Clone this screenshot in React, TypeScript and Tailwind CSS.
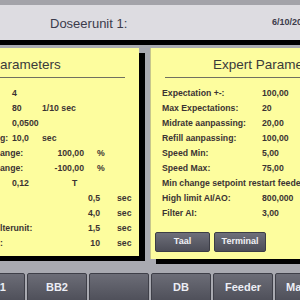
import React from "react";

export default function App() {
  return (
    <div
      className="w-[300px] h-[300px] overflow-hidden bg-[#a9aab1] flex flex-col"
      style={{ fontFamily: '"Liberation Sans", Arial, sans-serif' }}
    >
      {/* top strip */}
      <div className="h-[5px] bg-[#a3a3a9] shrink-0" />
      {/* header */}
      <div className="h-[35px] bg-[#dddce1] shrink-0 flex items-center pt-[3px] whitespace-nowrap overflow-hidden">
        <span className="w-[272px] pl-[50px] text-[13px] text-[#3b3b4b] shrink-0">Doseerunit 1:</span>
        <span className="text-[9px] font-bold text-[#3b3b4b] -mt-[2px]">6/10/2017</span>
      </div>
      {/* black band */}
      <div className="h-[5px] bg-black shrink-0" />
      {/* main area */}
      <div className="h-[228px] shrink-0 flex items-start pt-[3px]">
        {/* left panel */}
        <div className="-ml-[40px] w-[179px] h-[208px] shrink-0 bg-[#fdfd9e] shadow-[6px_5px_0_0_#000] flex flex-col overflow-hidden">
          <div className="h-[29px] shrink-0 flex items-center pl-[31px] pt-[5px] text-[13.5px] text-[#3a3a3a]">Parameters</div>
          <div className="h-px bg-[#707060] mr-[14px] shrink-0" />
          <div className="pt-[8px] pl-[40px] text-[8.7px] font-bold text-[#3b3333] whitespace-nowrap">
            <div className="flex h-[15px] items-center">
              <span className="w-[12px]" />
              <span>4</span>
            </div>
            <div className="flex h-[15px] items-center">
              <span className="w-[12px]" />
              <span className="w-[30px]">80</span>
              <span>1/10 sec</span>
            </div>
            <div className="flex h-[15px] items-center">
              <span className="w-[12px]" />
              <span>0,0500</span>
            </div>
            <div className="flex h-[15px] items-center">
              <span className="w-[12px]">g:</span>
              <span className="w-[30px]">10,0</span>
              <span>sec</span>
            </div>
            <div className="flex h-[15px] items-center">
              <span className="w-[40px]">ange:</span>
              <span className="w-[44px] text-right">100,00</span>
              <span className="w-[13px]" />
              <span>%</span>
            </div>
            <div className="flex h-[15px] items-center">
              <span className="w-[40px]">ange:</span>
              <span className="w-[44px] text-right">-100,00</span>
              <span className="w-[13px]" />
              <span>%</span>
            </div>
            <div className="flex h-[15px] items-center">
              <span className="w-[12px]" />
              <span className="w-[60px]">0,12</span>
              <span>T</span>
            </div>
            <div className="flex h-[15px] items-center">
              <span className="w-[60px]" />
              <span className="w-[40px] text-right">0,5</span>
              <span className="w-[17px]" />
              <span>sec</span>
            </div>
            <div className="flex h-[15px] items-center">
              <span className="w-[60px]" />
              <span className="w-[40px] text-right">4,0</span>
              <span className="w-[17px]" />
              <span>sec</span>
            </div>
            <div className="flex h-[15px] items-center">
              <span className="w-[60px]">lterunit:</span>
              <span className="w-[40px] text-right">1,5</span>
              <span className="w-[17px]" />
              <span>sec</span>
            </div>
            <div className="flex h-[15px] items-center">
              <span className="w-[60px]">:</span>
              <span className="w-[40px] text-right">10</span>
              <span className="w-[17px]" />
              <span>sec</span>
            </div>
          </div>
        </div>
        {/* right panel */}
        <div className="ml-[11px] w-[170px] h-[211px] shrink-0 bg-[#fdfd9e] border-l border-[#c6c68c] shadow-[6px_5px_0_0_#000] flex flex-col overflow-hidden">
          <div className="h-[29px] shrink-0 flex items-center pl-[62px] pt-[5px] text-[13.5px] text-[#3a3a3a] whitespace-nowrap">Expert Parameters</div>
          <div className="h-px bg-[#707060] ml-[14px] shrink-0" />
          <div className="pt-[8px] pl-[11px] text-[8.7px] font-bold text-[#3b3333] whitespace-nowrap">
            {[
              ["Expectation +-:", "100,00"],
              ["Max Expectations:", "20"],
              ["Midrate aanpassing:", "20,00"],
              ["Refill aanpassing:", "100,00"],
              ["Speed Min:", "5,00"],
              ["Speed Max:", "75,00"],
              ["Min change setpoint restart feeder:", ""],
              ["High limit AI/AO:", "800,000"],
              ["Filter AI:", "3,00"],
            ].map(([l, v]) => (
              <div key={l} className="flex h-[15px] items-center">
                <span className={v ? "w-[100px]" : ""}>{l}</span>
                {v && <span>{v}</span>}
              </div>
            ))}
          </div>
          <div className="flex gap-[4px] pl-[4px] mt-[11px]">
            <div className="w-[55px] h-[20px] rounded-[2px] border border-[#3c3d46] bg-gradient-to-b from-[#6e6f7a] to-[#4d4e58] flex items-center justify-center text-[9px] font-bold text-[#f0f0f5]">Taal</div>
            <div className="w-[52px] h-[20px] rounded-[2px] border border-[#3c3d46] bg-gradient-to-b from-[#6e6f7a] to-[#4d4e58] flex items-center justify-center text-[9px] font-bold text-[#f0f0f5]">Terminal</div>
          </div>
        </div>
      </div>
      {/* bottom nav */}
      <div className="flex gap-[2px] -ml-[35px] h-[32px] shrink-0">
        {["BB1", "BB2", "", "DB", "Feeder", "Manual"].map((t, i) => (
          <div
            key={i}
            className="w-[60px] h-[32px] shrink-0 rounded-[2px] border border-[#3e3f48] bg-gradient-to-b from-[#6c6d77] to-[#4b4c56] flex items-center justify-center text-[11px] font-bold text-[#eceef5] pb-[3px]"
          >
            {t}
          </div>
        ))}
      </div>
    </div>
  );
}
